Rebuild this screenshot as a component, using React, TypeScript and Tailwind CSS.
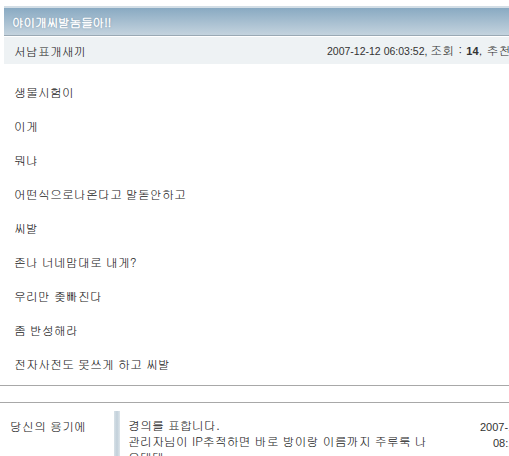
import React from "react";

const lines = [
  "생물시험이",
  "이게",
  "뭐냐",
  "어떤식으로나온다고 말돋안하고",
  "씨발",
  "존나 너네맘대로 내게?",
  "우리만 좆빠진다",
  "좀 반성해라",
  "전자사전도 못쓰게 하고 씨발",
];

const kr = "font-['Gulim','Noto_Sans_CJK_KR',sans-serif]";

const App: React.FC = () => {
  return (
    <div className={`w-[509px] h-[456px] overflow-hidden bg-white text-[#333] ${kr}`}>
      <div className="w-[600px] pt-[6px] pl-[4px]">
        {/* title bar */}
        <div className="h-[30px] border-t-2 border-[#d3dee6] border-b border-b-[#9aa9b4] bg-gradient-to-b from-[#89aac2] to-[#c4d3de] flex items-center pl-[8px]">
          <span className="text-white font-extrabold text-[12px] tracking-[-0.5px] [text-shadow:0_0_2px_#7d99ae]">
            야이개씨발놈들아!!
          </span>
        </div>

        {/* info row */}
        <div className="mt-[1px] h-[27px] bg-[#eef2f4] flex items-center pl-[10px]">
          <span className="w-[313px] text-[12px] text-[#222]">서남표개새끼</span>
          <span className="text-[12px] text-[#333] whitespace-nowrap">
            <span className="font-['Liberation_Sans',sans-serif] text-[10.5px]">2007-12-12 06:03:52, </span>
            조회 : <b className="font-['Liberation_Sans',sans-serif] text-[11px]">14</b>, 추천
          </span>
        </div>

        {/* body */}
        <div className="flex flex-col gap-[17px] pt-[19px] pl-[10px] pb-[13px]">
          {lines.map((l, i) => (
            <p key={i} className="text-[12px] leading-[17px] text-[#222] whitespace-pre">
              {l}
            </p>
          ))}
        </div>

        <div className="-ml-[4px] border-t border-[#a8a8a8] h-[17px]" />
        <div className="-ml-[4px] border-t border-[#a8a8a8]" />

        {/* comment */}
        <div className="flex pt-[8px] -ml-[4px]">
          <div className="w-[114px] pl-[10px] pt-[6px] text-[12px] text-[#222]">당신의 용기에</div>
          <div className="w-[6px] h-[50px] bg-gradient-to-r from-[#d7e1e7] via-[#c2d0da] to-[#dde5ea]" />
          <div className="w-[358px] pl-[8px] pt-[6px] text-[12px] leading-[16px] text-[#222]">
            <p>경의를 표합니다.</p>
            <p>관리자님이 IP추적하면 바로 방이랑 이름까지 주루룩 나</p>
            <p>오테데</p>
          </div>
          <div className="pt-[8px] text-[11px] leading-[16px] font-['Liberation_Sans',sans-serif] text-[#333] w-[40px]">
            <p className="whitespace-nowrap pl-[2px]">2007-12-12</p>
            <p className="whitespace-nowrap pl-[15px]">08:11:20</p>
          </div>
        </div>
      </div>
    </div>
  );
};

export default App;
